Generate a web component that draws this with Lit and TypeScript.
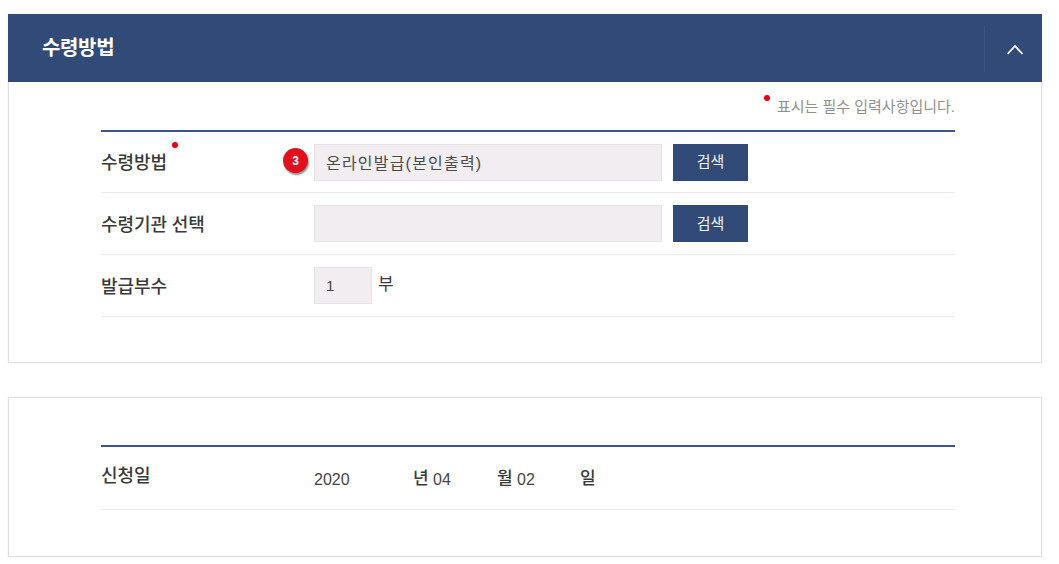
import { LitElement, html, css } from "lit";
import { customElement } from "lit/decorators.js";

@customElement("app-root")
export class AppRoot extends LitElement {
  static styles = css`
    :host {
      display: block;
      padding: 14px 17px 8px 8px;
      background: #fff;
      font-family: "Liberation Sans", "Noto Sans CJK KR", sans-serif;
      font-size: 16px;
      color: #333;
    }
    .panel {
      border: 1px solid #e0dcdd;
      box-shadow: 0 0 1px #ddd;
      background: #fff;
    }
    .panel.first { border-top: none; height: 349px; box-sizing: border-box; }
    .panel.second { margin-top: 34px; height: 160px; box-sizing: border-box; padding-top: 47px; }
    .head {
      margin: 0 -1px;
      height: 68px;
      background: #314a77;
      display: flex;
      align-items: center;
      justify-content: space-between;
      box-sizing: border-box;
    }
    .head h2 {
      margin: -3px 0 0 34px;
      font-size: 20px;
      font-weight: 700;
      color: #fff;
      letter-spacing: -0.35px;
    }
    .toggle {
      width: 59px;
      height: 46px;
      margin-top: 2px;
      border-left: 1px solid #3d5583;
      display: flex;
      align-items: center;
      justify-content: center;
      box-sizing: border-box;
      padding-left: 1px;
      margin-right: -1px;
    }
    .body { padding: 0 86px 0 92px; }
    .note {
      height: 48px;
      display: flex;
      justify-content: flex-end;
      align-items: flex-start;
      font-size: 15px;
      color: #8f8f8f;
      padding-top: 13px;
      box-sizing: border-box;
    }
    .note .dot { margin: 0 7px 0 0; }
    .dot {
      width: 6px;
      height: 6px;
      border-radius: 50%;
      background: #e60012;
      display: inline-block;
      flex: none;
    }
    .table { border-top: 2px solid #3f5488; }
    .row {
      height: 62px;
      box-sizing: border-box;
      border-bottom: 1px solid #eeeaeb;
      display: flex;
      align-items: center;
    }
    .row:first-child { height: 61px; }
    .label {
      width: 213px;
      flex: none;
      font-weight: 500;
      font-size: 18px;
      line-height: 26px;
      color: #3a3a3a;
      display: flex;
      align-items: flex-start;
      position: relative;
      letter-spacing: -0.1px;
      padding-top: 3px;
      margin-top: -1px;
    }
    .label .dot { margin: -8px 0 0 5px; }
    .badge {
      position: absolute;
      left: 182px;
      top: 1px;
      width: 25px;
      height: 25px;
      border-radius: 50%;
      background: #e0101f;
      color: #fff;
      font-size: 12px;
      font-weight: 700;
      letter-spacing: 0;
      display: flex;
      align-items: center;
      justify-content: center;
      box-shadow: 1px 2px 2px rgba(0, 0, 0, 0.45);
    }
    .field {
      width: 348px;
      height: 37px;
      box-sizing: border-box;
      background: #f1edf0;
      border: 1px solid #e8e2e4;
      padding: 0 11px;
      display: flex;
      align-items: center;
      font-size: 16px;
      letter-spacing: 1.2px;
      color: #4a4a4a;
    }
    .field.small {
      width: 58px;
      margin-top: -1px;
      font-size: 15px;
      font-weight: 500;
      color: #444;
      letter-spacing: 0;
    }
    .btn {
      margin-left: 11px;
      width: 75px;
      height: 37px;
      background: #314a77;
      color: #eef1f6;
      font-size: 15px;
      display: flex;
      align-items: center;
      justify-content: center;
      padding-bottom: 3px;
      box-sizing: border-box;
    }
    .unit { margin: -6px 0 0 6px; color: #3a3a3a; font-size: 17px; }
    .date { height: 64px; }
    .table .date:first-child { height: 63px; }
    .date .label { margin-top: -4px; padding-top: 0; }
    .date .value { display: flex; align-items: center; }
    .num { font-size: 16px; color: #444; padding-top: 3px; }
    .y { width: 99px; }
    .m { width: 64px; }
    .d { width: 63px; }
    .u { width: 20px; font-size: 17px; font-weight: 500; color: #3a3a3a; margin-top: -3px; }
  `;

  private search() {
    return html`<div class="btn">검색</div>`;
  }

  render() {
    return html`
      <section class="panel first">
        <div class="head">
          <h2>수령방법</h2>
          <div class="toggle">
            <svg width="18" height="11" viewBox="0 0 18 11" fill="none" stroke="#fff" stroke-width="1.8">
              <path d="M1.5 10 L9 2 L16.5 10" />
            </svg>
          </div>
        </div>
        <div class="body">
          <div class="note"><span class="dot"></span><span>표시는 필수 입력사항입니다.</span></div>
          <div class="table">
            <div class="row">
              <div class="label">수령방법<span class="dot"></span><span class="badge">3</span></div>
              <div class="field">온라인발급(본인출력)</div>
              ${this.search()}
            </div>
            <div class="row">
              <div class="label">수령기관 선택</div>
              <div class="field"></div>
              ${this.search()}
            </div>
            <div class="row">
              <div class="label">발급부수</div>
              <div class="field small">1</div>
              <span class="unit">부</span>
            </div>
          </div>
        </div>
      </section>
      <section class="panel second">
        <div class="body">
          <div class="table">
            <div class="row date">
              <div class="label">신청일</div>
              <div class="value">
                <span class="num y">2020</span><span class="u">년</span>
                <span class="num m">04</span><span class="u">월</span>
                <span class="num d">02</span><span class="u">일</span>
              </div>
            </div>
          </div>
        </div>
      </section>
    `;
  }
}
